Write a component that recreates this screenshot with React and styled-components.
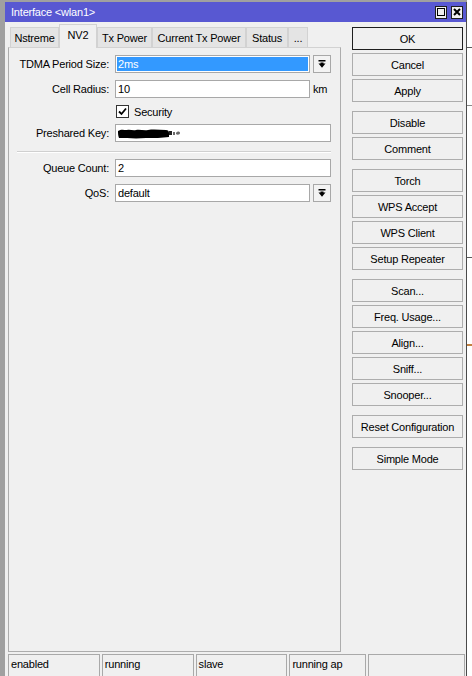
import styled, { createGlobalStyle } from "styled-components";

const GlobalStyle = createGlobalStyle`
  html, body {
    margin: 0;
    padding: 0;
    background: #ffffff;
  }
  body {
    font-family: "Liberation Sans", Arial, sans-serif;
    font-size: 11px;
    letter-spacing: -0.2px;
    color: #000;
  }
`;

const tabs = [
  { label: "Nstreme", width: 49 },
  { label: "NV2", width: 38, active: true },
  { label: "Tx Power", width: 55 },
  { label: "Current Tx Power", width: 94 },
  { label: "Status", width: 42 },
  { label: "...", width: 20 },
];

const buttonGroups = [
  ["OK", "Cancel", "Apply"],
  ["Disable", "Comment"],
  ["Torch", "WPS Accept", "WPS Client", "Setup Repeater"],
  ["Scan...", "Freq. Usage...", "Align...", "Sniff...", "Snooper..."],
  ["Reset Configuration"],
  ["Simple Mode"],
];

const statusCells = [
  { text: "enabled", width: 92 },
  { text: "running", width: 92 },
  { text: "slave", width: 92 },
  { text: "running ap", width: 77 },
  { text: "", width: 97 },
];

const DropIcon = () => (
  <svg width="8" height="8" viewBox="0 0 8 8">
    <rect x="0.5" y="0" width="7" height="1.5" fill="#000" />
    <rect x="2.5" y="2.5" width="3" height="1.5" fill="#000" />
    <polygon points="0.5,3.5 7.5,3.5 4,7.8" fill="#000" />
  </svg>
);

const Select = ({ value, selected }) => (
  <Field>
    <TextBox $selected={selected}>{value}</TextBox>
    <DropButton>
      <DropIcon />
    </DropButton>
  </Field>
);

// the key is blacked out in the screenshot
const Redaction = () => (
  <svg width="64" height="11" viewBox="0 0 64 11">
    <path
      d="M0 3 C3 1 6 2 9 2 C12 1 15 3 18 2 C22 1 26 3 30 2 C36 1 42 2 48 2 C50 2 51 3 51 5 L51 9 C44 10 36 10 28 10 C18 11 8 10 1 10 C0 8 0 5 0 3 Z"
      fill="#000"
    />
    <path d="M51 3 L54 3 L54 7 L51 7 Z" fill="#222" />
    <path d="M55 4 L57 4 L57 7 L55 7 Z M58 5 C59 3 62 3 62 5 C62 7 59 7 58 6 Z" fill="#6a6a6a" />
  </svg>
);

const App = () => {
  return (
    <>
      <GlobalStyle />
      <Page>
        <Window>
          <TitleBar>
            <TitleText>Interface &lt;wlan1&gt;</TitleText>
            <TitleButtons>
              <TitleButton>
                <svg width="8" height="8" viewBox="0 0 8 8">
                  <rect x="0.5" y="0.5" width="7" height="7" fill="none" stroke="#000" />
                </svg>
              </TitleButton>
              <TitleButton>
                <svg width="8" height="8" viewBox="0 0 8 8">
                  <path d="M1 1 L7 7 M7 1 L1 7" stroke="#000" strokeWidth="2" />
                </svg>
              </TitleButton>
            </TitleButtons>
          </TitleBar>

          <Body>
            <MainRow>
              <LeftColumn>
                <TabRow>
                  {tabs.map((t) => (
                    <Tab key={t.label} $width={t.width} $active={t.active}>
                      {t.label}
                    </Tab>
                  ))}
                </TabRow>
                <Panel>
                  <Form>
                    <Row>
                      <Label>TDMA Period Size:</Label>
                      <Select value="2ms" selected />
                    </Row>
                    <Row>
                      <Label>Cell Radius:</Label>
                      <Field>
                        <TextBox>10</TextBox>
                        <Unit>km</Unit>
                      </Field>
                    </Row>
                    <CheckRow>
                      <span />
                      <CheckLabel>
                        <CheckBox>
                          <svg width="9" height="9" viewBox="0 0 9 9">
                            <path d="M1 4.5 L3.5 7 L8 1.5" fill="none" stroke="#000" strokeWidth="1.8" />
                          </svg>
                        </CheckBox>
                        Security
                      </CheckLabel>
                    </CheckRow>
                    <Row>
                      <Label>Preshared Key:</Label>
                      <Field>
                        <TextBox>
                          <Redaction />
                        </TextBox>
                      </Field>
                    </Row>
                    <Separator />
                    <Row>
                      <Label>Queue Count:</Label>
                      <Field>
                        <TextBox>2</TextBox>
                      </Field>
                    </Row>
                    <Row>
                      <Label>QoS:</Label>
                      <Select value="default" />
                    </Row>
                  </Form>
                </Panel>
              </LeftColumn>

              <ButtonColumn>
                {buttonGroups.map((group, i) => (
                  <ButtonGroup key={i}>
                    {group.map((b) => (
                      <Button key={b} $primary={b === "OK"}>
                        {b}
                      </Button>
                    ))}
                  </ButtonGroup>
                ))}
              </ButtonColumn>
            </MainRow>

            <StatusBar>
              {statusCells.map((c, i) => (
                <StatusCell key={i} $width={c.width}>
                  {c.text}
                </StatusCell>
              ))}
            </StatusBar>
          </Body>
        </Window>
        <BackStrip />
      </Page>
    </>
  );
};

const Page = styled.div`
  width: 472px;
  height: 676px;
  overflow: hidden;
  display: flex;
  box-sizing: border-box;
  padding: 2px 0 0 5px;
  background: #a0a0a0;
`;

const Window = styled.div`
  width: 462px;
  box-sizing: border-box;
  border-right: 1px solid #4a4a4a;
  display: flex;
  flex-direction: column;
  background: #f0f0f0;
`;

const BackStrip = styled.div`
  flex: 1;
  margin-top: -2px;
  background:
    linear-gradient(#5a5a5a, #5a5a5a) 0 47px / 100% 1px no-repeat,
    linear-gradient(#8a8a8a, #8a8a8a) 0 105px / 100% 1px no-repeat,
    linear-gradient(#5a5a5a, #5a5a5a) 0 257px / 100% 1px no-repeat,
    linear-gradient(#c28040, #c28040) 0 344px / 100% 2px no-repeat,
    #ffffff;
`;

const TitleBar = styled.div`
  height: 20px;
  flex-shrink: 0;
  display: flex;
  align-items: center;
  justify-content: space-between;
  padding: 0 3px 0 6px;
  background: #5858d2;
  color: #ffffff;
`;

const TitleText = styled.span`
  font-size: 11px;
  line-height: 20px;
`;

const TitleButtons = styled.div`
  display: flex;
  gap: 4px;
`;

const TitleButton = styled.div`
  width: 12px;
  height: 13px;
  box-sizing: border-box;
  border: 1px solid #1e1e1e;
  background: #f0f0f0;
  display: flex;
  align-items: center;
  justify-content: center;
`;

const Body = styled.div`
  flex: 1;
  display: flex;
  flex-direction: column;
  padding: 2px 1px 0 3px;
`;

const MainRow = styled.div`
  display: flex;
  gap: 11px;
`;

const LeftColumn = styled.div`
  width: 333px;
  display: flex;
  flex-direction: column;
`;

const TabRow = styled.div`
  height: 23px;
  display: flex;
  align-items: flex-end;
  padding-left: 2px;
  position: relative;
  z-index: 1;
`;

const Tab = styled.div`
  width: ${(p) => p.$width}px;
  height: ${(p) => (p.$active ? 24 : 20)}px;
  margin-bottom: ${(p) => (p.$active ? -1 : 0)}px;
  box-sizing: border-box;
  border: 1px solid #d2d2d2;
  border-bottom: none;
  background: ${(p) => (p.$active ? "#f0f0f0" : "#e4e4e4")};
  display: flex;
  align-items: center;
  justify-content: center;
  padding-bottom: ${(p) => (p.$active ? 3 : 0)}px;
  white-space: nowrap;
`;

const Panel = styled.div`
  height: 605px;
  box-sizing: border-box;
  border: 1px solid #adadad;
  border-top-color: #d2d2d2;
  padding: 7px 9px 0 0;
`;

const Form = styled.div`
  display: flex;
  flex-direction: column;
  gap: 7px;
`;

const Row = styled.div`
  display: grid;
  grid-template-columns: 100px 1fr;
  column-gap: 6px;
  align-items: center;
  height: 18px;
`;

const CheckRow = styled(Row)`
  height: 12px;
`;

const Label = styled.label`
  text-align: right;
  white-space: nowrap;
`;

const Field = styled.div`
  display: flex;
  align-items: center;
  gap: 3px;
`;

const TextBox = styled.div`
  flex: 1;
  height: 18px;
  box-sizing: border-box;
  border: 1px solid #a8a8a8;
  background: ${(p) => (p.$selected ? "#3399ff" : "#ffffff")};
  box-shadow: ${(p) => (p.$selected ? "inset 0 0 0 1px #ffffff" : "none")};
  color: ${(p) => (p.$selected ? "#ffffff" : "#000000")};
  padding: 0 2px;
  line-height: 16px;
  display: flex;
  align-items: center;
`;

const Unit = styled.span`
  width: 18px;
`;

const DropButton = styled.div`
  width: 18px;
  height: 18px;
  box-sizing: border-box;
  border: 1px solid #a8a8a8;
  background: #f3f3f3;
  display: flex;
  align-items: center;
  justify-content: center;
`;

const CheckLabel = styled.div`
  display: flex;
  align-items: center;
  gap: 5px;
  margin-left: 1px;
`;

const CheckBox = styled.div`
  width: 13px;
  height: 13px;
  box-sizing: border-box;
  border: 1px solid #333333;
  background: #ffffff;
  display: flex;
  align-items: center;
  justify-content: center;
`;

const Separator = styled.div`
  height: 0;
  margin: 2px 0 -1px 8px;
  border-top: 1px solid #d0d0d0;
  border-bottom: 1px solid #ffffff;
`;

const ButtonColumn = styled.div`
  width: 111px;
  padding-top: 3px;
  display: flex;
  flex-direction: column;
  gap: 9px;
`;

const ButtonGroup = styled.div`
  display: flex;
  flex-direction: column;
  gap: 3px;
`;

const Button = styled.div`
  height: 23px;
  box-sizing: border-box;
  border: 1px solid ${(p) => (p.$primary ? "#1e1e1e" : "#adadad")};
  background: #f0f0f0;
  display: flex;
  align-items: center;
  justify-content: center;
  white-space: nowrap;
`;

const StatusBar = styled.div`
  margin-top: 2px;
  display: flex;
  gap: 2px;
`;

const StatusCell = styled.div`
  width: ${(p) => p.$width}px;
  height: 24px;
  box-sizing: border-box;
  border: 1px solid #a9a9a9;
  padding: 3px 0 0 2px;
  line-height: 13px;
  white-space: nowrap;
`;

export default App;
